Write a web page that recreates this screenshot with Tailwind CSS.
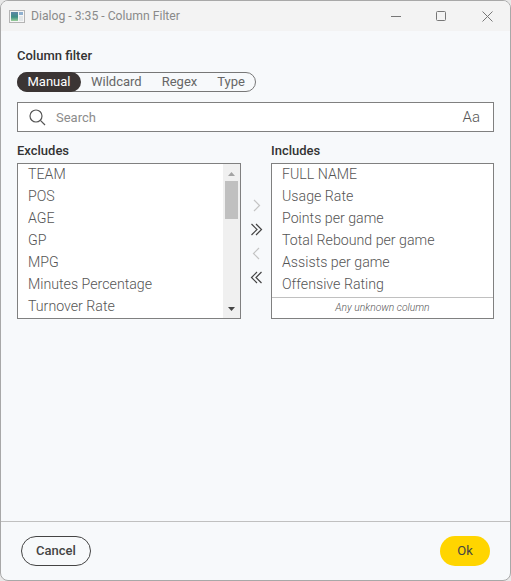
<!DOCTYPE html>
<html lang="en">
<head>
  <meta charset="UTF-8" />
  <title>Dialog - 3:35 - Column Filter</title>
  <script src="https://cdn.jsdelivr.net/npm/@tailwindcss/browser@4"></script>
</head>
<body class="bg-[#e8e8e8] font-['Roboto',sans-serif]">
  <div class="w-[511px] h-[581px] flex flex-col overflow-hidden rounded-[8px] border border-[#a8a8a8] bg-[#f7f9fb]">
    <!-- title bar -->
    <div class="h-[30px] shrink-0 flex items-center bg-[#f3f3f3] pl-[8px]">
      <svg width="16" height="13" viewBox="0 0 16 13">
        <defs>
          <linearGradient id="ico" x1="0" y1="0" x2="0" y2="1">
            <stop offset="0" stop-color="#5f86a8" />
            <stop offset="0.55" stop-color="#3f8f86" />
            <stop offset="1" stop-color="#9ccf9a" />
          </linearGradient>
        </defs>
        <rect x="0.5" y="0.5" width="15" height="12" fill="#f6f6f6" stroke="#b4b4b4" />
        <rect x="2" y="2" width="7" height="9" fill="url(#ico)" />
        <rect x="10" y="2" width="4" height="3" fill="#8fb0cf" />
        <rect x="10" y="6" width="4" height="5" fill="#e2e6e8" />
      </svg>
      <span class="ml-[6px] text-[12.2px] text-[#8a8a8a]">Dialog - 3:35 - Column Filter</span>
      <div class="ml-auto flex items-center">
        <svg class="mr-[35px]" width="10" height="10" viewBox="0 0 10 10"><path d="M0 5.5H10" stroke="#777" fill="none" /></svg>
        <svg class="mr-[36px]" width="10" height="10" viewBox="0 0 10 10"><rect x="0.5" y="0.5" width="9" height="9" rx="1" stroke="#777" fill="none" /></svg>
        <svg class="mr-[17px]" width="11" height="11" viewBox="0 0 11 11"><path d="M0.5 0.5L10.5 10.5M10.5 0.5L0.5 10.5" stroke="#777" fill="none" /></svg>
      </div>
    </div>

    <!-- content -->
    <div class="flex-1 px-[16px] pt-[17px]">
      <div class="text-[13px] leading-[16px] font-medium text-[#333]">Column filter</div>

      <div class="mt-[8px] w-[239px] h-[20px] flex items-center rounded-full border border-[#777] text-[13px] text-[#666]">
        <span class="w-[64px] h-[20px] -ml-px flex items-center justify-center rounded-full bg-[#3b3534] text-white">Manual</span>
        <span class="ml-[10px]">Wildcard</span>
        <span class="ml-[20px]">Regex</span>
        <span class="ml-[20px]">Type</span>
      </div>

      <div class="mt-[10px] w-[477px] h-[30px] flex items-center border border-[#808080] bg-white pl-[11px] pr-[13px]">
        <svg width="17" height="17" viewBox="0 0 17 17" fill="none" stroke="#555" stroke-width="1.2">
          <circle cx="7" cy="7" r="6" />
          <path d="M11.4 11.4L16 16" />
        </svg>
        <span class="ml-[10px] pt-px text-[13px] text-[#8c8c8c]">Search</span>
        <span class="ml-auto text-[15px] font-light text-[#555]">Aa</span>
      </div>

      <div class="mt-[11px] flex">
        <!-- excludes -->
        <div class="w-[224px]">
          <div class="text-[13px] leading-[16px] font-medium text-[#333] mb-[4px]">Excludes</div>
          <div class="h-[156px] flex border border-[#808080] bg-white">
            <div class="flex-1 pl-[10px] text-[14.2px] leading-[22px] font-light text-[#555] overflow-hidden">
              <div class="-mt-px">TEAM</div>
              <div>POS</div>
              <div>AGE</div>
              <div>GP</div>
              <div>MPG</div>
              <div>Minutes Percentage</div>
              <div>Turnover Rate</div>
            </div>
            <div class="w-[17px] flex flex-col items-center bg-[#f0f0f0]">
              <svg class="mt-[8px]" width="7" height="4" viewBox="0 0 7 4"><path d="M3.5 0L7 4H0Z" fill="#a3a3a3" /></svg>
              <div class="mt-[5px] w-[13px] h-[38px] bg-[#c0c0c0]"></div>
              <svg class="mt-auto mb-[7px]" width="7" height="4" viewBox="0 0 7 4"><path d="M0 0H7L3.5 4Z" fill="#444" /></svg>
            </div>
          </div>
        </div>

        <!-- move buttons -->
        <div class="w-[30px] flex flex-col items-center pt-[56px] gap-[11px]">
          <svg width="13" height="13" viewBox="0 0 13 13" fill="none" stroke="#c4c4c4" stroke-width="1.2"><path d="M4 1L9.5 6.5L4 12" /></svg>
          <svg width="13" height="13" viewBox="0 0 13 13" fill="none" stroke="#444" stroke-width="1.2"><path d="M1.5 1L7 6.5L1.5 12M6 1L11.5 6.5L6 12" /></svg>
          <svg width="13" height="13" viewBox="0 0 13 13" fill="none" stroke="#c4c4c4" stroke-width="1.2"><path d="M9 1L3.5 6.5L9 12" /></svg>
          <svg width="13" height="13" viewBox="0 0 13 13" fill="none" stroke="#444" stroke-width="1.2"><path d="M7 1L1.5 6.5L7 12M11.5 1L6 6.5L11.5 12" /></svg>
        </div>

        <!-- includes -->
        <div class="w-[223px]">
          <div class="text-[13px] leading-[16px] font-medium text-[#333] mb-[4px]">Includes</div>
          <div class="h-[156px] flex flex-col border border-[#808080] bg-white">
            <div class="h-[133px] pl-[10px] text-[14.2px] leading-[22px] font-light text-[#555]">
              <div class="-mt-px">FULL NAME</div>
              <div>Usage Rate</div>
              <div>Points per game</div>
              <div>Total Rebound per game</div>
              <div>Assists per game</div>
              <div>Offensive Rating</div>
            </div>
            <div class="flex-1 flex items-center justify-center border-t border-[#c0c0c0] text-[10.3px] font-light italic text-[#555]">Any unknown column</div>
          </div>
        </div>
      </div>
    </div>

    <!-- footer -->
    <div class="h-[59px] shrink-0 flex items-center justify-between border-t border-[#c0c0c0] pl-[20px] pr-[20px]">
      <button class="w-[70px] h-[30px] rounded-full border border-[#444] text-[13px] font-medium text-[#444]">Cancel</button>
      <button class="w-[50px] h-[30px] rounded-full bg-[#ffd500] text-[13px] text-[#444]">Ok</button>
    </div>
  </div>
</body>
</html>
